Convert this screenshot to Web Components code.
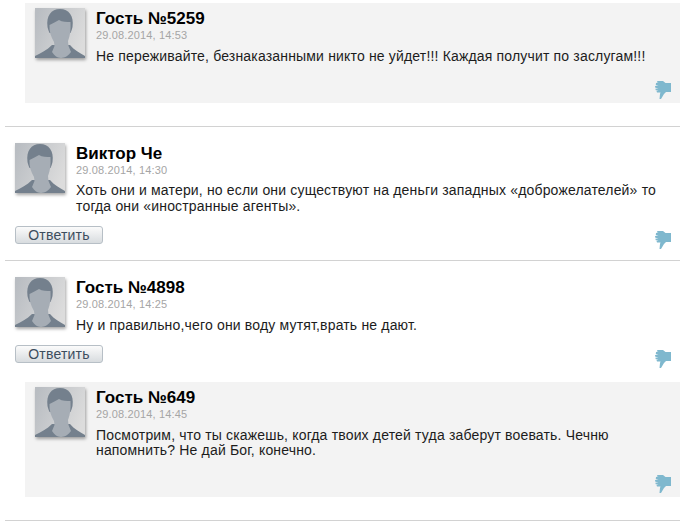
<!DOCTYPE html>
<html>
<head>
<meta charset="utf-8">
<title>Комментарии</title>
<style>
    html, body { margin: 0; padding: 0; background: #fff; }
    body { font-family: "Liberation Sans", Arial, sans-serif; overflow: hidden; }
</style>
</head>
<body>
<comment-list>
    <comment-thread first>
        <comment-item nested name="Гость №5259" date="29.08.2014, 14:53">Не переживайте, безнаказанными никто не уйдет!!! Каждая получит по заслугам!!!</comment-item>
    </comment-thread>
    <comment-thread>
        <comment-item reply name="Виктор Че" date="29.08.2014, 14:30">Хоть они и матери, но если они существуют на деньги западных «доброжелателей» то тогда они «иностранные агенты».</comment-item>
    </comment-thread>
    <comment-thread>
        <comment-item reply name="Гость №4898" date="29.08.2014, 14:25">Ну и правильно,чего они воду мутят,врать не дают.</comment-item>
        <comment-item nested name="Гость №649" date="29.08.2014, 14:45">Посмотрим, что ты скажешь, когда твоих детей туда заберут воевать. Чечню напомнить? Не дай Бог, конечно.</comment-item>
    </comment-thread>
</comment-list>

<script>
class CommentList extends HTMLElement {
    constructor() {
        super();
        this.attachShadow({ mode: 'open' });
        this.shadowRoot.innerHTML = `
            <style>
                :host { display: block; padding: 0 6px 0 5px; }
            </style>
            <slot></slot>
        `;
    }
}

class CommentThread extends HTMLElement {
    constructor() {
        super();
        this.attachShadow({ mode: 'open' });
        this.shadowRoot.innerHTML = `
            <style>
                :host { display: block; padding-top: 16px; border-bottom: 1px solid #d2d2d2; }
                :host([first]) { padding-top: 0; }
            </style>
            <slot></slot>
        `;
    }
}

class UserAvatar extends HTMLElement {
    constructor() {
        super();
        this.attachShadow({ mode: 'open' });
        this.shadowRoot.innerHTML = `
            <style>
                :host { display: block; width: 50px; height: 50px; flex: none; box-shadow: 1px 2px 3px rgba(0,0,0,.35); }
                svg { display: block; }
            </style>
            <svg width="50" height="50" viewBox="0 0 50 50">
                <defs>
                    <linearGradient id="bg" x1="0" y1="0.2" x2="1" y2="0.6">
                        <stop offset="0" stop-color="#b9bdc2"/>
                        <stop offset="1" stop-color="#dcdcdc"/>
                    </linearGradient>
                </defs>
                <rect width="50" height="50" fill="url(#bg)"/>
                <path d="M0 50 L0 48 C6 45 12 42 17 37 L35 37 C39 42 45 45 50 48 L50 50 Z" fill="#74808d"/>
                <path d="M12.5 19 C11 8 16 1 25 1 C34 1 39 8 37.5 19 C37 21 36.5 23 35.5 25 L14.5 25 C13.5 23 13 21 12.5 19 Z" fill="#74808d"/>
                <path d="M14.5 17 C18 15 21 14 24 12 C27 14 32 14 35.5 14 C36 22 35 28 33 33 L33.5 38 L36 44 C34 47 30 50 26 50 C22 50 19 47 17 44 L19.5 38 L19 34 C16 29 14 23 14.5 17 Z" fill="#a6adb5"/>
            </svg>
        `;
    }
}

class DislikeIcon extends HTMLElement {
    constructor() {
        super();
        this.attachShadow({ mode: 'open' });
        this.shadowRoot.innerHTML = `
            <style>
                :host { display: block; width: 16px; height: 18px; }
                svg { display: block; }
            </style>
            <svg width="16" height="18" viewBox="0 0 16 18">
                <path fill="#7fb8ce" d="M2.5 0 L8 0 L10.5 2 L16 2 L16 11 L11 11 L9 13 L6 18 L4.5 18 L5 13 L5.5 11.5 L2 11.5 L1.5 10 L3.5 9.5 L.8 9.3 L.3 7.7 L3.5 7.2 L.3 6.8 L0 5 L3.5 4.6 L.8 4 L1 2 L3.5 1.8 L1.8 1.2 Z"/>
            </svg>
        `;
    }
}

class ReplyButton extends HTMLElement {
    constructor() {
        super();
        this.attachShadow({ mode: 'open' });
        this.shadowRoot.innerHTML = `
            <style>
                :host { display: block; }
                button {
                    display: block;
                    box-sizing: border-box;
                    width: 88px;
                    height: 18px;
                    margin: 0;
                    padding: 1px 0 0;
                    border: 1px solid #b7bfc6;
                    border-radius: 3px;
                    background: linear-gradient(#fbfbfb, #d8dcdf);
                    color: #3c4d5e;
                    font: 14px/15px "Liberation Sans", Arial, sans-serif;
                    letter-spacing: .2px;
                }
            </style>
            <button type="button"><slot></slot></button>
        `;
    }
}

class CommentItem extends HTMLElement {
    constructor() {
        super();
        this.attachShadow({ mode: 'open' });
        const name = this.getAttribute('name');
        const date = this.getAttribute('date');
        const reply = this.hasAttribute('reply') ? '<reply-button>Ответить</reply-button>' : '<span></span>';
        this.shadowRoot.innerHTML = `
            <style>
                :host { display: block; padding: 0 9px 16px 10px; color: #1c1c1c; }
                :host([nested]) { margin: 3px 0 22.5px 20px; padding: 5px 9px 9px 10px; background: #f3f3f3; }
                .head { display: flex; gap: 11px; align-items: flex-start; }
                .name { font: bold 17px/22px "Liberation Sans", Arial, sans-serif; color: #000; }
                .date { font-size: 11px; line-height: 10px; letter-spacing: .15px; color: #a5a5a5; }
                .text { margin-top: 8.6px; font-size: 14px; line-height: 15.4px; letter-spacing: .17px; }
                .foot { display: flex; justify-content: space-between; margin-top: 12px; }
                dislike-icon { margin: 5px 0 -5px; }
            </style>
            <div class="head">
                <user-avatar></user-avatar>
                <div class="body">
                    <div class="name">${name}</div>
                    <div class="date">${date}</div>
                    <div class="text"><slot></slot></div>
                </div>
            </div>
            <div class="foot">
                ${reply}
                <dislike-icon></dislike-icon>
            </div>
        `;
    }
}

customElements.define('comment-list', CommentList);
customElements.define('comment-thread', CommentThread);
customElements.define('user-avatar', UserAvatar);
customElements.define('dislike-icon', DislikeIcon);
customElements.define('reply-button', ReplyButton);
customElements.define('comment-item', CommentItem);
</script>
</body>
</html>
